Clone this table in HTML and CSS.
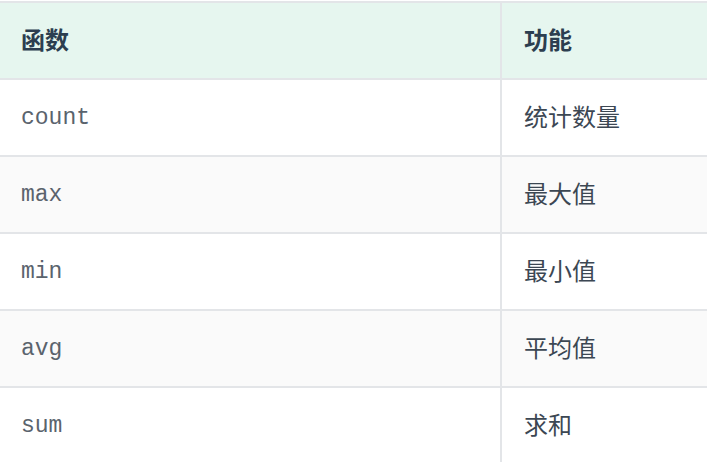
FILE: index.html
```html
<!DOCTYPE html>
<html lang="zh">
<head>
<meta charset="utf-8">
<link rel="stylesheet" href="styles.css">
</head>
<body>
<table class="fn-table">
  <colgroup><col class="c1"><col class="c2"></colgroup>
  <thead>
    <tr><th>函数</th><th>功能</th></tr>
  </thead>
  <tbody>
    <tr><td><code>count</code></td><td>统计数量</td></tr>
    <tr><td><code>max</code></td><td>最大值</td></tr>
    <tr><td><code>min</code></td><td>最小值</td></tr>
    <tr><td><code>avg</code></td><td>平均值</td></tr>
    <tr><td><code>sum</code></td><td>求和</td></tr>
  </tbody>
</table>
</body>
</html>
```

FILE: styles.css
```css
html, body {
  margin: 0;
  padding: 0;
  background: #ffffff;
  overflow: hidden;
}
body {
  padding-top: 1px;
  font-family: "Noto Sans CJK SC", "Noto Sans", sans-serif;
}
.fn-table {
  border-collapse: collapse;
  table-layout: fixed;
  width: 100%;
  border-top: 2px solid #e3e5e8;
}
.c1 { width: 501px; }
.fn-table th,
.fn-table td {
  height: 72px;
  padding: 0 22px 3px;
  line-height: 30px;
  vertical-align: middle;
  text-align: left;
  font-size: 24px;
  border-bottom: 2px solid #e3e5e8;
}
.fn-table th:first-child,
.fn-table td:first-child {
  border-right: 2px solid #e3e5e8;
  padding-left: 21px;
}
.fn-table th {
  background: #e6f6ef;
  color: #2c3e50;
  font-weight: 700;
}
.fn-table td {
  color: #3c4753;
  font-weight: 400;
}
.fn-table tbody tr:nth-child(even) td {
  background: #fafafa;
}
.fn-table code {
  font-family: "Liberation Mono", "Courier New", monospace;
  font-size: 23px;
  color: #5a636d;
}
```
